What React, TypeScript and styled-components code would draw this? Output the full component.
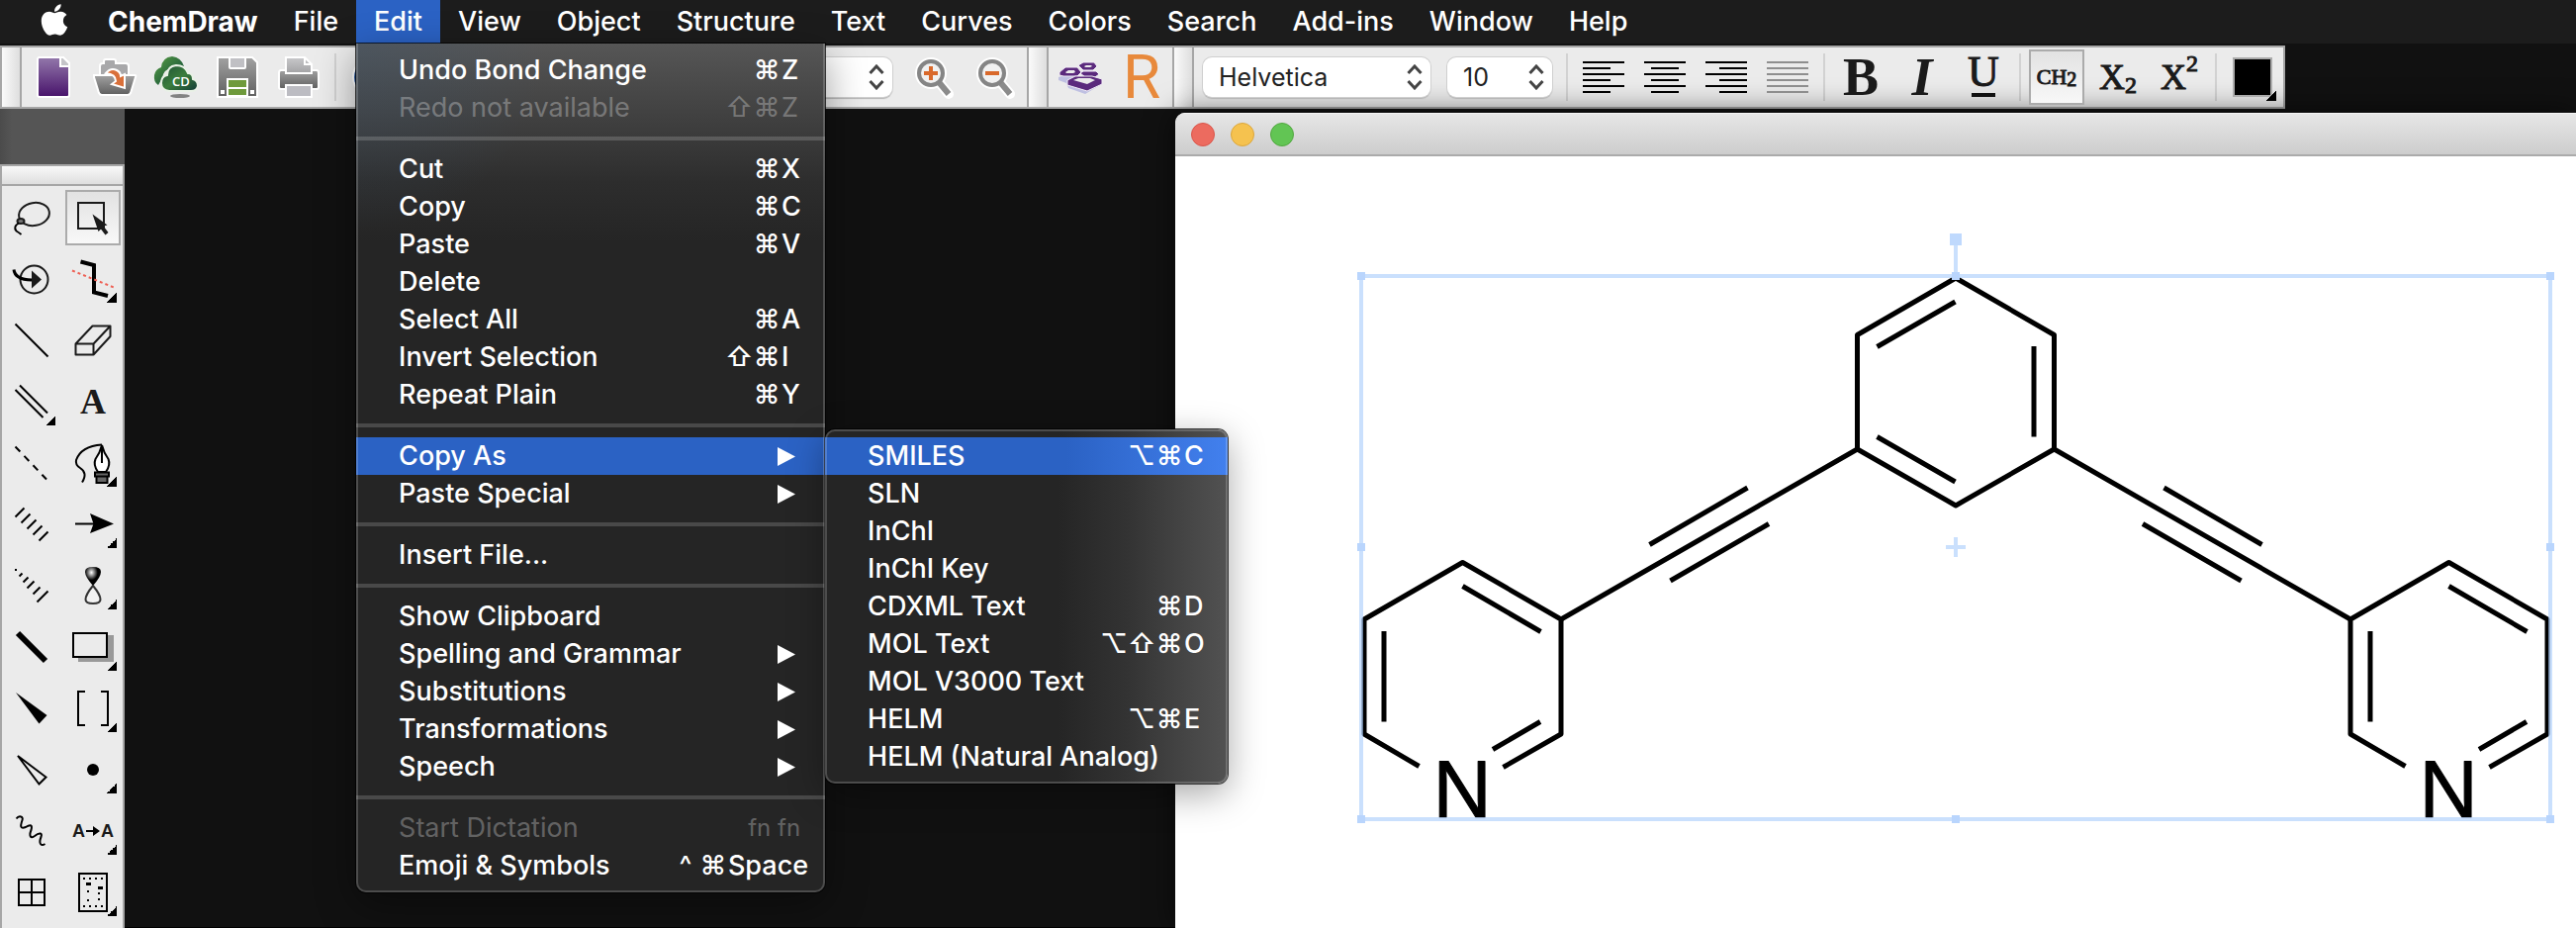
import React from 'react';
import styled, { createGlobalStyle, css } from 'styled-components';
import { FaApple } from 'react-icons/fa';

const UI = 'Inter, "Liberation Sans", sans-serif';
const SERIF = '"Liberation Serif", serif';

const GlobalStyle = createGlobalStyle`
  *, *::before, *::after { box-sizing: border-box; }
  body { margin: 0; background: #111; font-family: ${UI}; }
  ul { list-style: none; margin: 0; padding: 0; }
  button { margin: 0; padding: 0; border: 0; background: none; color: inherit; font: inherit; }
`;

const Desktop = styled.div`
  display: flex;
  flex-direction: column;
  min-height: 100vh;
  overflow: hidden;
  background: #111;
`;

/* ---------- system menu bar ---------- */

const MenuBar = styled.nav`
  display: flex;
  height: 44px;
  flex: none;
  background: #1c1c1c;
  color: #fff;
  font-size: 27px;
  font-weight: 500;
  position: relative;
  z-index: 5;
`;

const MenuSlot = styled.div`
  position: relative;
  display: flex;
`;

const MenuTitle = styled.button<{ $open?: boolean; $app?: boolean }>`
  height: 44px;
  padding: 0 18px;
  line-height: 44px;
  white-space: nowrap;
  background: ${(p) => (p.$open ? '#2b62c4' : 'none')};
  ${(p) => p.$app && css`
    font-weight: 700;
    font-size: 28px;
  `}
`;

const AppleButton = styled.button`
  display: flex;
  height: 40px;
  align-items: center;
  padding: 0 18px 0 37px;
  font-size: 36px;
`;

const panel = css`
  position: absolute;
  padding: 8px 0;
  font-size: 27px;
  font-weight: 500;
  color: #fff;
  box-shadow: 0 0 0 1px rgba(0, 0, 0, 0.75), 0 12px 40px rgba(0, 0, 0, 0.4);
  &::after {
    content: '';
    position: absolute;
    inset: 0;
    border: 2px solid rgba(255, 255, 255, 0.18);
    border-radius: inherit;
    pointer-events: none;
  }
`;

const EditMenu = styled.ul`
  ${panel}
  top: 100%;
  left: 0;
  width: 474px;
  border-radius: 0 0 10px 10px;
  background:
    radial-gradient(circle at 0 0, rgba(60, 85, 110, 0.35), transparent 190px),
    linear-gradient(180deg, #565656 0, #4a4a4a 40px, #3c3c3c 90px, #2d2d2d 140px, #252525 200px);
  &::after { border-top: 0; }
`;

const SubMenu = styled.ul`
  ${panel}
  top: -8px;
  left: 100%;
  width: 407px;
  border-radius: 10px;
  background: linear-gradient(90deg, #252525 58%, #333 75%, #525252 100%);
  box-shadow: 0 0 0 1px rgba(0, 0, 0, 0.75), 0 10px 36px rgba(0, 0, 0, 0.35);
`;

const MenuRow = styled.li`
  position: relative;
`;

const Divider = styled.li`
  height: 4px;
  margin: 10px 0;
  background: rgba(255, 255, 255, 0.17);
`;

const MenuButton = styled.button<{ $state?: 'active' | 'glow' | 'off' }>`
  display: flex;
  align-items: center;
  width: 100%;
  height: 38px;
  padding: 0 17px 0 43px;
  line-height: 38px;
  text-align: left;
  white-space: nowrap;
  color: ${(p) => (p.$state === 'off' ? 'rgba(255,255,255,0.3)' : '#fff')};
  font-weight: ${(p) => (p.$state === 'off' ? 400 : 500)};
  background: ${(p) =>
    p.$state === 'active' ? '#2b62c4'
    : p.$state === 'glow' ? 'linear-gradient(90deg, #2b62c4 60%, #4280ee 100%)'
    : 'none'};
`;

const ItemLabel = styled.span`
  flex: 1;
`;

const Modifier = styled.kbd`
  width: 28px;
  font: inherit;
  text-align: center;
`;

const Key = styled.kbd<{ $small?: boolean }>`
  min-width: 28px;
  padding-left: 1px;
  font: inherit;
  ${(p) => p.$small && css`
    font-size: 24px;
    padding-right: 8px;
  `}
`;

const SubmenuArrow = styled.svg`
  width: 18px;
  height: 19px;
  margin-right: 13px;
`;

type Item = {
  label: string;
  mods?: string;
  keyName?: string;
  small?: boolean;
  arrow?: boolean;
  state?: 'active' | 'glow' | 'off';
  sub?: Item[];
};

const EDIT_GROUPS: Item[][] = [
  [
    { label: 'Undo Bond Change', mods: '⌘', keyName: 'Z' },
    { label: 'Redo not available', mods: '⇧⌘', keyName: 'Z', state: 'off' },
  ],
  [
    { label: 'Cut', mods: '⌘', keyName: 'X' },
    { label: 'Copy', mods: '⌘', keyName: 'C' },
    { label: 'Paste', mods: '⌘', keyName: 'V' },
    { label: 'Delete' },
    { label: 'Select All', mods: '⌘', keyName: 'A' },
    { label: 'Invert Selection', mods: '⇧⌘', keyName: 'I' },
    { label: 'Repeat Plain', mods: '⌘', keyName: 'Y' },
  ],
  [
    {
      label: 'Copy As',
      arrow: true,
      state: 'active',
      sub: [
        { label: 'SMILES', mods: '⌥⌘', keyName: 'C', state: 'glow' },
        { label: 'SLN' },
        { label: 'InChI' },
        { label: 'InChI Key' },
        { label: 'CDXML Text', mods: '⌘', keyName: 'D' },
        { label: 'MOL Text', mods: '⌥⇧⌘', keyName: 'O' },
        { label: 'MOL V3000 Text' },
        { label: 'HELM', mods: '⌥⌘', keyName: 'E' },
        { label: 'HELM (Natural Analog)' },
      ],
    },
    { label: 'Paste Special', arrow: true },
  ],
  [{ label: 'Insert File...' }],
  [
    { label: 'Show Clipboard' },
    { label: 'Spelling and Grammar', arrow: true },
    { label: 'Substitutions', arrow: true },
    { label: 'Transformations', arrow: true },
    { label: 'Speech', arrow: true },
  ],
  [
    { label: 'Start Dictation', keyName: 'fn fn', small: true, state: 'off' },
    { label: 'Emoji & Symbols', mods: '^⌘', keyName: 'Space' },
  ],
];

function MenuEntry({ item }: { item: Item }) {
  return (
    <MenuRow>
      <MenuButton $state={item.state} disabled={item.state === 'off'}>
        <ItemLabel>{item.label}</ItemLabel>
        {item.mods && [...item.mods].map((m) => <Modifier key={m}>{m}</Modifier>)}
        {item.keyName && <Key $small={item.small}>{item.keyName}</Key>}
        {item.arrow && (
          <SubmenuArrow viewBox="0 0 18 19" aria-hidden="true">
            <path d="M0 0 L18 9.5 L0 19 Z" fill="#fff" />
          </SubmenuArrow>
        )}
      </MenuButton>
      {item.sub && (
        <SubMenu aria-label={item.label}>
          {item.sub.map((s) => <MenuEntry key={s.label} item={s} />)}
        </SubMenu>
      )}
    </MenuRow>
  );
}

/* ---------- toolbar ---------- */

const Toolbar = styled.header`
  display: flex;
  flex: none;
  align-self: flex-start;
  height: 64px;
  margin-top: 2px;
  border: 2px solid #a6a6a6;
  background: #ebebeb;
  color: #1a1a1a;
`;

const Grip = styled.div<{ $first?: boolean }>`
  width: ${(p) => (p.$first ? 20 : 22)}px;
  flex: none;
  border: solid #a6a6a6;
  border-width: 0 2px 0 ${(p) => (p.$first ? 0 : 2)}px;
  background: linear-gradient(90deg, #fafafa, #dedede);
`;

const ToolGroup = styled.div<{ $wide?: boolean }>`
  display: flex;
  align-items: center;
  padding-left: 1px;
  ${(p) => p.$wide && 'width: 1016px;'}
`;

const ToolSeparator = styled.div`
  width: 2px;
  height: 48px;
  margin: 0 5px;
  background: #d2d2d2;
`;

const ToolButton = styled.button<{ $on?: boolean }>`
  position: relative;
  flex: none;
  width: 56px;
  height: 56px;
  line-height: 56px;
  text-align: center;
  ${(p) => p.$on && css`
    border: 2px solid #ababab;
    background: linear-gradient(180deg, #e2e2e2, #f8f8f8);
    line-height: 52px;
  `}
  ${ToolGroup} & { margin: 0 3px; }
`;

const Art = styled.svg<{ $on?: boolean }>`
  display: block;
  width: 56px;
  height: 56px;
  margin: ${(p) => (p.$on ? '-2px' : 0)};
`;

const FlyoutMark = styled.span`
  position: absolute;
  right: 4px;
  bottom: 4px;
  width: 10px;
  height: 10px;
  background: linear-gradient(135deg, transparent 50%, #000 50%);
`;

const SelectBox = styled.span<{ $w: number; $push?: boolean }>`
  position: relative;
  display: flex;
  align-items: center;
  width: ${(p) => p.$w}px;
  height: 40px;
  margin: 0 9px 0 8px;
  border-radius: 9px;
  background: #fff;
  box-shadow: 0 0 0 1px #cfcfcf, 0 2px 1px #b4b4b4;
  ${(p) => p.$push && 'margin: 0 12px 0 auto;'}
`;

const Select = styled.select`
  appearance: none;
  width: 100%;
  height: 40px;
  padding: 0 0 0 16px;
  border: 0;
  background: transparent;
  color: #222;
  font: 400 25px ${UI};
`;

const Chevrons = styled.svg`
  position: absolute;
  right: 8px;
  width: 16px;
  height: 26px;
  pointer-events: none;
`;

const Glyph = styled.span<{ $size: number; $bold?: boolean; $italic?: boolean }>`
  font-family: ${SERIF};
  font-size: ${(p) => p.$size}px;
  font-weight: ${(p) => (p.$bold ? 700 : 400)};
  font-style: ${(p) => (p.$italic ? 'italic' : 'normal')};
  -webkit-text-stroke: ${(p) => (p.$bold ? 0 : 1)}px currentColor;
`;

const Script = styled.span<{ $rise: number; $size: number }>`
  font-size: ${(p) => p.$size}px;
  line-height: 0;
  vertical-align: ${(p) => p.$rise}px;
`;

const UnderlineGlyph = styled.span`
  display: flex;
  flex-direction: column;
  align-items: center;
  gap: 6px;
  font: 400 44px/30px ${SERIF};
  -webkit-text-stroke: 1px currentColor;
  &::after {
    content: '';
    width: 24px;
    height: 4px;
    background: #111;
  }
`;

const Registry = styled.span`
  color: #e8893b;
  font: 400 62px/56px Roboto, sans-serif;
`;

const Swatch = styled.span`
  display: block;
  width: 40px;
  height: 40px;
  margin-left: 8px;
  border: 2px solid #ababab;
  background: #000;
`;

function Picker({ label, value, w, push }: { label: string; value: string; w: number; push?: boolean }) {
  return (
    <SelectBox $w={w} $push={push}>
      <Select aria-label={label} defaultValue={value}>
        <option value={value}>{value}</option>
      </Select>
      <Chevrons viewBox="0 0 16 26" fill="none" stroke="#444" strokeWidth="3" aria-hidden="true">
        <path d="M1.500 9 L8 2 L14.500 9 M1.500 17 L8 24 L14.500 17" />
      </Chevrons>
    </SelectBox>
  );
}

function AlignIcon({ mode }: { mode: 'left' | 'center' | 'right' | 'full' }) {
  return (
    <Art viewBox="0 0 56 56" aria-hidden="true">
      {[0, 1, 2, 3, 4, 5].map((i) => {
        const w = mode === 'full' || i % 2 === 0 ? 42 : 28;
        const x = mode === 'left' ? 7 : mode === 'right' ? 49 - w : 28 - w / 2;
        return <rect key={i} x={x} y={12 + i * 6} width={w} height="2" fill={mode === 'full' ? '#8e8e8e' : '#000'} />;
      })}
    </Art>
  );
}

function Gradients() {
  return (
    <defs>
      <linearGradient id="purple" x1="0" y1="0" x2="0" y2="1">
        <stop offset="0" stopColor="#9378ab" /><stop offset="1" stopColor="#47126a" />
      </linearGradient>
      <linearGradient id="steel" x1="0" y1="0" x2="0" y2="1">
        <stop offset="0" stopColor="#a2a2a2" /><stop offset="1" stopColor="#5f5f5f" />
      </linearGradient>
      <linearGradient id="paper" x1="0" y1="0" x2="0" y2="1">
        <stop offset="0" stopColor="#c9c9cb" /><stop offset="1" stopColor="#a2a2a4" />
      </linearGradient>
      <linearGradient id="cloud" x1="0" y1="0" x2="1" y2="1">
        <stop offset="0" stopColor="#1c4f37" /><stop offset="0.5" stopColor="#3b7d3c" /><stop offset="1" stopColor="#123b38" />
      </linearGradient>
      <linearGradient id="leaf" x1="0" y1="0" x2="1" y2="1">
        <stop offset="0" stopColor="#5aa043" /><stop offset="0.55" stopColor="#2c6b3d" /><stop offset="1" stopColor="#164a3e" />
      </linearGradient>
      <radialGradient id="ball" cx="0.4" cy="0.3" r="0.4">
        <stop offset="0" stopColor="#fff" /><stop offset="1" stopColor="#000" />
      </radialGradient>
    </defs>
  );
}

const NewIcon = () => (
  <Art viewBox="0 0 56 56" aria-hidden="true">
    <Gradients />
    <path d="M14 8 H38 L44 14 V46 Q44 48 42 48 H14 Q12 48 12 46 V10 Q12 8 14 8 Z" fill="url(#purple)" stroke="#fff" strokeWidth="2" />
    <path d="M35 8 H38 L44 14 V17 H35 Z" fill="#c4c4c8" stroke="#fff" strokeWidth="2" />
  </Art>
);

const OpenIcon = () => (
  <Art viewBox="0 0 56 56" aria-hidden="true">
    <path d="M13 27 V17 Q13 14 16 14 H17 V12 Q17 10 19 10 H27 Q29 10 29 12 V14 H39 Q42 14 42 17 V27 Z" fill="#a8a8aa" stroke="#fff" strokeWidth="2" />
    <path d="M7 26 H48 Q50 26 49 28 L44 44 Q43 46 41 46 H15 Q13 46 12 44 L7 28 Z" fill="url(#steel)" stroke="#fff" strokeWidth="2" />
    <path d="M19 24 Q24 18 30 21 Q34 23 34 27 L38 25 V39 L25 35 L29 32 Q29 25 19 24 Z" fill="#d9703a" stroke="#fff" strokeWidth="2" />
  </Art>
);

const CloudIcon = () => (
  <Art viewBox="0 0 56 56" aria-hidden="true">
    <ellipse cx="32" cy="47" rx="10" ry="2" fill="#555" opacity="0.7" />
    <path d="M10 36 Q5 33 6 26 Q7 20 13 18 Q14 8 24 7 Q33 8 36 17 Q30 15 25 18 Q15 20 14 29 Z" fill="url(#leaf)" />
    <path d="M21 42 Q13 41 13 34 Q13 27 19 26 Q19 17 28 16 Q37 16 40 24 Q45 24 45 30 Q50 31 50 37 Q49 42 43 42 Z" fill="url(#cloud)" stroke="#e9f1e6" strokeWidth="2" />
    <text x="24" y="37" fill="#fff" fontFamily="Open Sans, sans-serif" fontSize="13" fontWeight="600">CD</text>
  </Art>
);

const SaveIcon = () => (
  <Art viewBox="0 0 56 56" aria-hidden="true">
    <path d="M8 8 H43 L48 13 V48 H8 Z" fill="url(#steel)" stroke="#fff" strokeWidth="2" />
    <rect x="20" y="8" width="16" height="11" rx="1" fill="#c0c0c4" stroke="#fff" strokeWidth="2" />
    <rect x="17" y="29" width="22" height="19" fill="#fff" />
    <rect x="19" y="31" width="18" height="7" fill="#6f9a3c" />
    <rect x="19" y="40" width="18" height="6" fill="#6f9a3c" />
    <rect x="11" y="41" width="4" height="4" fill="#fff" />
    <rect x="41" y="41" width="4" height="4" fill="#fff" />
  </Art>
);

const PrintIcon = () => (
  <Art viewBox="0 0 56 56" aria-hidden="true">
    <path d="M10 21 H46 Q48 21 48 24 V38 Q48 40 46 40 H10 Q8 40 8 38 V24 Q8 21 10 21 Z" fill="url(#steel)" stroke="#fff" strokeWidth="2" />
    <path d="M15 8 H34 L41 15 V24 H15 Z" fill="url(#paper)" stroke="#fff" strokeWidth="2" />
    <path d="M34 8 V15 H41" fill="none" stroke="#fff" strokeWidth="2" />
    <rect x="15" y="36" width="26" height="12" fill="#bcbcc2" stroke="#fff" strokeWidth="2" />
  </Art>
);

const UndoIcon = () => (
  <Art viewBox="0 0 56 56" aria-hidden="true">
    <circle cx="28" cy="28" r="19" fill="#2d5fa8" stroke="#fff" strokeWidth="2" />
    <path d="M18 28 L27 20 V25 Q38 25 38 36 Q34 31 27 31 V36 Z" fill="#fff" />
  </Art>
);

const ZoomIcon = ({ plus }: { plus?: boolean }) => (
  <Art viewBox="0 0 56 56" aria-hidden="true">
    <path d="M32 33 L42 45" stroke="#fff" strokeWidth="10" strokeLinecap="round" />
    <circle cx="24" cy="24" r="12" fill="#f4f4f4" stroke="#fff" strokeWidth="8" />
    <path d="M32 33 L42 45" stroke="#8b8b8b" strokeWidth="6" />
    <circle cx="24" cy="24" r="12" fill="#f1f1f1" stroke="#858585" strokeWidth="4" />
    <path d={plus ? 'M17 24 H31 M24 17 V31' : 'M17 24 H31'} stroke="#d9692b" strokeWidth="4" />
  </Art>
);

const HexIcon = () => (
  <Art viewBox="0 0 56 56" aria-hidden="true">
    <path d="M6 28 L20 24 L30 30 L48 36 L33 45 L16 39 L14 34 L6 31 Z" fill="#bfc0e2" />
    <path d="M26 16 L31 13 H42 L45 17 L41 21 H31 Z M7 23 L13 18 H25 L29 23 L25 27 H11 L7 26 Z M28 24 L31 22 H44 L47 25 L43 28 H33 Z" fill="#5b2a7d" stroke="#f3eef8" strokeWidth="1" />
    <path d="M15 31 L23 27 H40 L50 30 V35 L35 42 L15 36 Z" fill="#5b2a7d" stroke="#f3eef8" strokeWidth="1" />
    <path d="M32 17 L34 16 H39 L40 17 L38 18 H33 Z M13 23 L16 21 H22 L23 23 L21 24 H14 Z M21 31 L26 29 H38 L43 31 L35 35 Z" fill="#ebebeb" />
  </Art>
);

/* ---------- tool palette ---------- */

const Workspace = styled.main`
  display: grid;
  grid-template-columns: 126px minmax(0, 1062fr) minmax(0, 1416fr);
  flex: 1;
`;

const SideColumn = styled.aside`
  display: flex;
  flex-direction: column;
  background: linear-gradient(90deg, #4b4b4b, #555 12px);
`;

const Palette = styled.section`
  flex: 1;
  margin-top: 56px;
  border: solid #a6a6a6;
  border-width: 2px 2px 0;
  background: #ebebeb;
  color: #1a1a1a;
`;

const PaletteHandle = styled.div`
  height: 20px;
  border-bottom: 2px solid #a6a6a6;
  background: linear-gradient(180deg, #f9f9f9, #dedede);
`;

const PaletteGrid = styled.div`
  display: grid;
  grid-template-columns: 56px 56px;
  gap: 6px;
  padding: 4px 2px 8px;
`;

const ConvertLabel = styled.span`
  display: flex;
  align-items: center;
  justify-content: center;
  gap: 1px;
  font: 700 18px/56px "Liberation Sans", sans-serif;
`;

const Line = (p: { d: string; w?: number }) => (
  <path d={p.d} fill="none" stroke="#000" strokeWidth={p.w ?? 2} />
);

const TOOLS: { name: string; fly?: boolean; on?: boolean; art?: React.ReactNode; text?: React.ReactNode }[] = [
  { name: 'Lasso', art: (
    <>
      <ellipse cx="30.500" cy="24.500" rx="15.500" ry="11.500" transform="rotate(-10 30.500 24.500)" fill="none" stroke="#1a1a1a" strokeWidth="2" />
      <ellipse cx="17" cy="31.500" rx="3.500" ry="2.500" fill="#777" stroke="#1a1a1a" strokeWidth="2" />
      <Line d="M15 33.500 Q9 37 12.500 41.500 Q15 43 17.500 45" />
    </>) },
  { name: 'Marquee', on: true, art: (
    <>
      <rect x="13" y="13" width="26" height="26" fill="none" stroke="#1a1a1a" strokeWidth="2" />
      <path d="M27.500 24.500 L42.500 35.500 L38.500 36.500 L43.500 43 L40.500 45.500 L36 39.500 L33.500 42 Z" fill="#1a1a1a" />
    </>) },
  { name: '3D rotate', art: (
    <>
      <circle cx="30.500" cy="28.500" r="14" fill="none" stroke="#1a1a1a" strokeWidth="2" />
      <Line d="M10 18.500 Q11 28.500 28 29" w={3} />
      <path d="M28 19.500 L38 28.500 L28 37.500 Z" fill="#1a1a1a" />
    </>) },
  { name: 'Fragment', fly: true, art: (
    <>
      <Line d="M15.500 10.500 L29 14 V41.500 L43 45" w={4} />
      <path d="M7 19.500 L49 36.500" stroke="#ee6055" strokeWidth="2" strokeDasharray="3 3" />
    </>) },
  { name: 'Solid bond', art: <Line d="M11.500 11.500 L44.500 44.500" /> },
  { name: 'Eraser', art: (
    <path d="M10.500 31.500 H28.500 V42.500 H10.500 Z L27.500 13.500 H45.500 L28.500 31.500 M45.500 13.500 V24 L28.500 42.500" fill="none" stroke="#1a1a1a" strokeWidth="2" strokeLinejoin="round" />) },
  { name: 'Multiple bonds', fly: true, art: <Line d="M11.500 16 L39.500 44 M16 11.500 L44 39.500" /> },
  { name: 'Text', text: <Glyph $size={36} $bold>A</Glyph> },
  { name: 'Dashed bond', art: <path d="M11.500 11.500 L43 44.500" stroke="#000" strokeWidth="2" strokeDasharray="7 6" /> },
  { name: 'Pen', fly: true, art: (
    <>
      <Line d="M37 9.500 Q16 11 11 25 Q10 30 15 33 Q23 38 17 47.500" />
      <path d="M37 10 Q39 18 43.500 24 Q46 30 41 37 H33 Q28 30 30.500 24 Q35 18 37 10 Z" fill="#fff" stroke="#000" strokeWidth="2" />
      <Line d="M37 10 V28" />
      <rect x="31.500" y="41" width="11" height="7" fill="#666" stroke="#000" strokeWidth="2" />
      <rect x="30" y="37.500" width="14" height="4" fill="#666" stroke="#000" strokeWidth="2" />
    </>) },
  { name: 'Hashed bond', art: <Line d="M11.500 20.500 l9 -9 M17.500 26.500 l9 -9 M23.500 32.500 l9 -9 M29.500 38.500 l9 -9 M35.500 44.500 l9 -9" /> },
  { name: 'Arrow', fly: true, art: (
    <>
      <Line d="M10 27.500 H29" />
      <path d="M25 17 L49 27.500 L25 37 L28.500 27.500 Z" fill="#000" />
    </>) },
  { name: 'Hashed wedge', art: <Line d="M11 12 h2 M15.500 18.500 l3 -3 M19.500 24.500 l5 -5 M23.500 30.500 l7 -7 M29.500 36.500 l7 -7 M33.500 44.500 l11 -11" /> },
  { name: 'Orbital', fly: true, art: (
    <>
      <path d="M28 28 Q20 19 20 14 Q20 9 28 9 Q36 9 36 14 Q36 19 28 28 Z" fill="url(#ball)" />
      <path d="M28 28 Q20.500 37 20.500 42 Q20.500 46 28 46 Q35.500 46 35.500 42 Q35.500 37 28 28 Z" fill="#f2f2f2" stroke="#333" strokeWidth="2" />
    </>) },
  { name: 'Bold bond', art: <Line d="M14 14 L42 42" w={6} /> },
  { name: 'Drawing elements', fly: true, art: (
    <>
      <rect x="13" y="16" width="36" height="27" fill="#999" />
      <rect x="8" y="14" width="34" height="24" fill="#ebebeb" stroke="#000" strokeWidth="2" />
    </>) },
  { name: 'Wedge bond', art: <path d="M12 12 L43.500 35 L35.500 43.500 Z" fill="#000" /> },
  { name: 'Brackets', fly: true, art: <Line d="M20 11 H13 V45 H20 M36 11 H43 V45 H36" /> },
  { name: 'Hollow wedge', art: <Line d="M14 14 L42.500 35.500 L35.500 42.500 Z" /> },
  { name: 'Symbol', fly: true, art: <circle cx="28" cy="28" r="6" fill="#000" /> },
  { name: 'Wavy bond', art: <Line d="M12.500 15.500 C15 12 20 13 18.500 17 C16 24 17 26 22 24 C27 21 29 22 27.500 27 C25 33 27 36 31 33 C36 29 39 30 37.500 34 C35 40 37 44 41.500 41" /> },
  { name: 'Convert', fly: true, text: (
    <ConvertLabel>
      A
      <svg width="14" height="10" viewBox="0 0 14 10" aria-hidden="true"><path d="M0 4 H7 V0 L14 5 L7 10 V6 H0 Z" /></svg>
      A
    </ConvertLabel>) },
  { name: 'Table', art: <Line d="M15 15 H41 V41 H15 Z M28 15 V41 M15 28 H41" /> },
  { name: 'TLC plate', fly: true, art: (
    <>
      <rect x="14" y="9" width="28" height="38" fill="none" stroke="#000" strokeWidth="2" />
      <path d="M18 14 h2 m4 0 h2 m4 0 h2 m4 0 h2 M18 42 h2 m4 0 h2 m4 0 h2 m4 0 h2 M22 27 h2 M22 36 h2 M33 29 h2 M33 35 h2" stroke="#000" strokeWidth="2" />
      <path d="M21 19.500 h5 M33 23.500 h5" stroke="#000" strokeWidth="3" />
    </>) },
];

/* ---------- document window ---------- */

const Backdrop = styled.div`
  border-bottom: 1px solid #000;
`;

const DocumentWindow = styled.section`
  display: flex;
  flex-direction: column;
  margin-top: 4px;
  border-radius: 10px 0 0 0;
  overflow: hidden;
  background: #fff;
  box-shadow: 0 0 30px rgba(0, 0, 0, 0.6);
`;

const TitleBar = styled.div`
  display: flex;
  align-items: center;
  gap: 16px;
  height: 44px;
  padding-left: 16px;
  flex: none;
  border-top: 1px solid #f4f4f4;
  border-bottom: 2px solid #ababab;
  background: linear-gradient(180deg, #e6e6e6, #cdcdcd);
`;

const Light = styled.button<{ $fill: string; $edge: string }>`
  width: 24px;
  height: 24px;
  border-radius: 50%;
  border: 1px solid ${(p) => p.$edge};
  background: ${(p) => p.$fill};
`;

const Canvas = styled.svg`
  display: block;
  flex: none;
  width: 1416px;
  height: 780px;
`;

function Molecule() {
  return (
    <g fill="none" stroke="#000" strokeWidth="5" strokeLinejoin="round">
      <path d="M789 123 L888.500 180.500 V296 L789 353 L689.500 296 V180.500 Z" />
      <path d="M788.500 147 L709.500 192.500 M868 192 V283.500 M788.500 329 L709.500 283.500" />
      <path d="M689.500 296 L390 468 M888.500 296 L1188 468" />
      <path d="M578.500 335 L479.500 392.500 M600 371.500 L500.500 429 M999.500 335 L1098.500 392.500 M978 371.500 L1077.500 429" />
      {[0, 997].map((dx) => (
        <g key={dx} transform={`translate(${dx} 0)`}>
          <path d="M246.500 616.500 L191 584 V468 L290.500 410.500 L390 468 V584 L331.500 617.500" />
          <path d="M211 480 V571.500 M290.500 434.500 L369.500 480.500 M369 571.500 L321 599.500" />
          <text x="290" y="668" textAnchor="middle" fill="#000" stroke="#000" strokeWidth="1" fontFamily="Liberation Sans, sans-serif" fontSize="82">N</text>
        </g>
      ))}
    </g>
  );
}

function Selection() {
  const handles = [[188, 121], [789, 121], [1390, 121], [188, 395], [1390, 395], [188, 670], [789, 670], [1390, 670]];
  return (
    <g fill="none" stroke="#a9cdfc" strokeOpacity="0.62" strokeWidth="4">
      <rect x="188" y="121" width="1202" height="549" />
      <path d="M789 121 V90 M779 395 H799 M789 385 V405" />
      {handles.map(([x, y]) => (
        <rect key={`${x}-${y}`} x={x - 4} y={y - 4} width="8" height="8" stroke="none" fill="#b9d5fd" />
      ))}
      <rect x="783" y="78" width="12" height="12" stroke="none" fill="#bfd9fd" />
    </g>
  );
}

const MENUS = ['File', 'Edit', 'View', 'Object', 'Structure', 'Text', 'Curves', 'Colors', 'Search', 'Add-ins', 'Window', 'Help'];

export default function App() {
  return (
    <Desktop>
      <GlobalStyle />
      <MenuBar aria-label="Menu bar">
        <AppleButton aria-label="Apple menu"><FaApple /></AppleButton>
        <MenuTitle $app>ChemDraw</MenuTitle>
        {MENUS.map((m) => (
          <MenuSlot key={m}>
            <MenuTitle $open={m === 'Edit'}>{m}</MenuTitle>
            {m === 'Edit' && (
              <EditMenu aria-label="Edit">
                {EDIT_GROUPS.map((group, i) => (
                  <React.Fragment key={i}>
                    {i > 0 && <Divider role="separator" />}
                    {group.map((item) => <MenuEntry key={item.label} item={item} />)}
                  </React.Fragment>
                ))}
              </EditMenu>
            )}
          </MenuSlot>
        ))}
      </MenuBar>

      <Toolbar>
        <Grip $first />
        <ToolGroup $wide>
          <ToolButton aria-label="New document"><NewIcon /></ToolButton>
          <ToolButton aria-label="Open"><OpenIcon /></ToolButton>
          <ToolButton aria-label="Open from cloud"><CloudIcon /></ToolButton>
          <ToolButton aria-label="Save"><SaveIcon /></ToolButton>
          <ToolButton aria-label="Print"><PrintIcon /></ToolButton>
          <ToolSeparator />
          <ToolButton aria-label="Undo"><UndoIcon /></ToolButton>
          <Picker label="Zoom level" value="" w={110} push />
          <ToolButton aria-label="Zoom in"><ZoomIcon plus /></ToolButton>
          <ToolButton aria-label="Zoom out"><ZoomIcon /></ToolButton>
        </ToolGroup>
        <Grip />
        <ToolGroup>
          <ToolButton aria-label="3D viewer"><HexIcon /></ToolButton>
          <ToolButton aria-label="Reaxys"><Registry>R</Registry></ToolButton>
        </ToolGroup>
        <Grip />
        <ToolGroup>
          <Picker label="Font" value="Helvetica" w={230} />
          <Picker label="Font size" value="10" w={106} />
          <ToolSeparator />
          <ToolButton aria-label="Align left"><AlignIcon mode="left" /></ToolButton>
          <ToolButton aria-label="Align center"><AlignIcon mode="center" /></ToolButton>
          <ToolButton aria-label="Align right"><AlignIcon mode="right" /></ToolButton>
          <ToolButton aria-label="Justify"><AlignIcon mode="full" /></ToolButton>
          <ToolSeparator />
          <ToolButton aria-label="Bold"><Glyph $size={54} $bold>B</Glyph></ToolButton>
          <ToolButton aria-label="Italic"><Glyph $size={54} $bold $italic>I</Glyph></ToolButton>
          <ToolButton aria-label="Underline"><UnderlineGlyph>U</UnderlineGlyph></ToolButton>
          <ToolSeparator />
          <ToolButton $on aria-label="Formula">
            <Glyph $size={22}>CH<Script $size={20} $rise={-2}>2</Script></Glyph>
          </ToolButton>
          <ToolButton aria-label="Subscript">
            <Glyph $size={36}>X<Script $size={24} $rise={-4}>2</Script></Glyph>
          </ToolButton>
          <ToolButton aria-label="Superscript">
            <Glyph $size={36}>X<Script $size={24} $rise={18}>2</Script></Glyph>
          </ToolButton>
          <ToolSeparator />
          <ToolButton aria-label="Color"><Swatch /><FlyoutMark /></ToolButton>
        </ToolGroup>
      </Toolbar>

      <Workspace>
        <SideColumn>
          <Palette aria-label="Tools">
            <PaletteHandle />
            <PaletteGrid>
              {TOOLS.map((t) => (
                <ToolButton key={t.name} $on={t.on} aria-label={t.name}>
                  {t.text ?? <Art $on={t.on} viewBox="0 0 56 56" aria-hidden="true">{t.art}</Art>}
                  {t.fly && <FlyoutMark />}
                </ToolButton>
              ))}
            </PaletteGrid>
          </Palette>
        </SideColumn>
        <Backdrop />
        <DocumentWindow aria-label="Document">
          <TitleBar>
            <Light $fill="#ec6b5f" $edge="#d9554a" aria-label="Close" />
            <Light $fill="#f5c24f" $edge="#dba63c" aria-label="Minimize" />
            <Light $fill="#62c554" $edge="#51a73f" aria-label="Zoom window" />
          </TitleBar>
          <Canvas viewBox="0 0 1416 780" role="img" aria-label="Molecule drawing">
            <Molecule />
            <Selection />
          </Canvas>
        </DocumentWindow>
      </Workspace>
    </Desktop>
  );
}
